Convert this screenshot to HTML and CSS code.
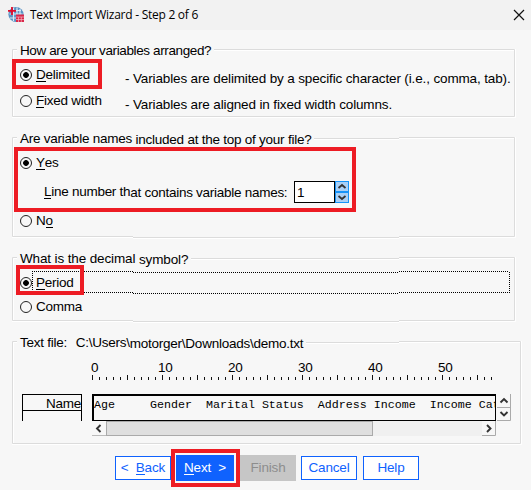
FILE: index.html
```html
<!DOCTYPE html>
<html lang="en">
<head>
<meta charset="utf-8">
<title>Text Import Wizard - Step 2 of 6</title>
<link rel="stylesheet" href="styles.css">
</head>
<body>
<div class="window">
  <header class="titlebar">
    <svg class="app-icon" width="18" height="18" viewBox="0 0 18 18">
      <circle cx="9" cy="8.500" r="7.600" fill="#5b92c4"/>
      <path d="M4 4.500h10M2.500 8h13M3 12h7M6.500 2v13M10 1.500v14M13 3v6" stroke="#d9e9f5" stroke-width="1.200" fill="none"/>
      <path d="M5 1v8M1 4.800h8" stroke="#e00b2b" stroke-width="1.800"/>
      <path d="M9 8.500h8V16H9z" fill="#d92749"/>
      <path d="M9 11h8M9 13.500h8M11.500 11v5M14.300 11v5" stroke="#f5b5bf" stroke-width=".7"/>
    </svg>
    <h1 class="title">Text Import Wizard - Step 2 of 6</h1>
    <svg class="close" width="12" height="12" viewBox="0 0 12 12"><path d="M1 1l10 10M11 1L1 11" stroke="#111" stroke-width="1.200"/></svg>
  </header>

  <main class="content">
    <section class="group arrange">
      <svg class="frame" width="504" height="69"><path class="hi" d="M1.500 67.500V1.500H502M503.500 0V68.500H0"/><path d="M.5.5H502.500V67.500H.5z"/></svg>
      <h2 class="legend">How are your variables arranged?</h2>
      <div class="row r-delimited"><i class="radio on"></i><span class="opt"><u>D</u>elimited</span><span class="desc">- Variables are delimited by a specific character (i.e., comma, tab).</span></div>
      <div class="row r-fixed"><i class="radio"></i><span class="opt"><u>F</u>ixed width</span><span class="desc">- Variables are aligned in fixed width columns.</span></div>
      <div class="mark mark-delimited"></div>
    </section>

    <section class="group names">
      <svg class="frame" width="504" height="102"><path class="hi" d="M1.500 99V1.500H121M121 2.500H387M387 1.500H502M503.500 0V100.500H387M387 101.500H121M121 100.500H0"/><path d="M121 .5H.5V99.500H121M121 1.500H387M121 100.500H387M387 .5H502.500V99.500H387"/></svg>
      <h2 class="legend">Are variable names <span class="low">included at the top of your file?</span></h2>
      <div class="row r-yes"><i class="radio on"></i><span class="opt"><u>Y</u>es</span></div>
      <div class="row r-line">
        <span class="line-label"><u>L</u>ine number th<span class="low">at contains variable names:</span></span>
        <div class="spinner"><span class="value">1</span>
          <div class="steps">
            <svg width="14" height="11" viewBox="0 0 14 11"><rect x=".5" y=".5" width="13" height="10" fill="#a9d0f7" stroke="#1693f8"/><path d="M3.500 7L7 4l3.500 3" fill="none" stroke="#333" stroke-width="1.800"/></svg>
            <svg width="14" height="11" viewBox="0 0 14 11"><rect x=".5" y=".5" width="13" height="10" fill="#a9d0f7" stroke="#1693f8"/><path d="M3.500 4L7 7l3.500-3" fill="none" stroke="#333" stroke-width="1.800"/></svg>
          </div>
        </div>
      </div>
      <div class="row r-no"><i class="radio"></i><span class="opt">N<u>o</u></span></div>
      <div class="mark mark-yes"></div>
    </section>

    <section class="group decimal">
      <svg class="frame" width="504" height="66"><path class="hi" d="M1.500 63V1.500H121M121 2.500H387M387 1.500H502M503.500 0V64.500H387M387 65.500H121M121 64.500H0"/><path d="M121 .5H.5V63.500H121M121 1.500H387M121 64.500H387M387 .5H502.500V63.500H387"/><path class="focus" d="M20.500 14V35M20 14.500H121M20 35.500H121M121 15.500H387M121 36.500H387M387 14.500H497M387 35.500H497M497.500 15V36"/></svg>
      <h2 class="legend">What is the decimal <span class="low">symbol?</span></h2>
      <div class="row r-period"><i class="radio on"></i><span class="opt"><u>P</u>eriod</span></div>
      <div class="row r-comma"><i class="radio"></i><span class="opt">Comma</span></div>
      <div class="mark mark-period"></div>
    </section>

    <section class="group file">
      <svg class="frame" width="510" height="104"><path class="hi" d="M1.500 102V1.500H121M121 2.500H387M387 1.500H508M509.500 0V103.500H0"/><path d="M121 .5H.5V102.500H508.500V.5H387M121 1.500H387"/></svg>
      <h2 class="legend">Text file: <span class="path">C:\Users\<span class="low">motorger\Downloads\demo.txt</span></span></h2>
      <div class="ruler">
        <div class="numbers"><span>0</span><span>10</span><span>20</span><span>30</span><span>40</span><span>50</span></div>
        <svg width="404" height="5"><path d="M0 3.500H400" stroke="#111" stroke-width="3" stroke-dasharray="1 6"/><path d="M0 2.500H400" stroke="#111" stroke-width="5" stroke-dasharray="1 34"/></svg>
      </div>
      <div class="preview">
        <div class="name-col"><div class="name">Name</div></div>
        <div class="data">
          <pre class="text">Age     Gender  Marital Status  Address Income  Income Cat</pre>
          <div class="hscroll">
            <svg width="14" height="15"><path d="M8.500 4L5 7.500L8.500 11" fill="none" stroke="#333" stroke-width="1.900"/></svg>
            <div class="thumb"></div>
            <svg class="right" width="14" height="15"><path d="M5 4l3.500 3.500L5 11" fill="none" stroke="#333" stroke-width="1.900"/><path d="M0 14.500H13.500V0" fill="none" stroke="#aaa"/></svg>
          </div>
        </div>
        <svg class="vscroll" width="14" height="27"><path d="M0 26.500H13.500V0M0 13.500H14" fill="none" stroke="#aaa"/><path d="M3.500 8.500L7 5l3.500 3.500M3.500 18L7 21.500l3.500-3.500" fill="none" stroke="#333" stroke-width="1.900"/></svg>
      </div>
    </section>
  </main>

  <footer class="buttons">
    <button class="btn back">&lt; &nbsp;<u>B</u>ack</button>
    <button class="btn next"><u>N</u>ext &nbsp;&gt;</button>
    <button class="btn finish">Finish</button>
    <button class="btn cancel">Cancel</button>
    <button class="btn help">Help</button>
    <div class="mark mark-next"></div>
  </footer>
</div>
</body>
</html>
```
FILE: styles.css
```css
* { box-sizing: border-box; }
body { margin: 0; background: #f7f7f7; color: #000; font: 13.5px/16px "Liberation Sans", Arial, sans-serif; letter-spacing: -.24px; }
.window { width: 531px; height: 490px; overflow: hidden; }
h1, h2, pre { margin: 0; font-weight: normal; }
u { text-decoration: none; border-bottom: 1px solid currentColor; display: inline-block; height: 15px; line-height: 16px; }
.titlebar { height: 30px; display: flex; align-items: center; padding: 0 6px 1px 7px; background: #f2f2f2; }
.app-icon { flex: none; margin-right: 5px; }
.title { font: 12px/18px "Open Sans", "Noto Sans", sans-serif; letter-spacing: -.26px; flex: 1; white-space: nowrap; }
.content { padding: 19px 11px 0 12px; display: flex; flex-direction: column; }
.group { position: relative; width: 504px; }
.frame { position: absolute; left: 0; top: 0; overflow: visible; }
.frame path { fill: none; stroke: #dcdcdc; }
.frame .hi { stroke: #fff; }
.frame .focus { stroke: #000; stroke-dasharray: 1 1; }
.legend { position: absolute; left: 5px; top: -6px; padding: 0 3px; background: #f7f7f7; font-size: 13.5px; line-height: 16px; height: 16px; white-space: pre; }
.low { position: relative; top: 1px; }
.arrange { height: 88px; padding-top: 17px; }
.arrange .legend { letter-spacing: -.38px; }
.names { height: 120px; padding-top: 17px; }
.decimal { height: 84px; padding-top: 17px; }
.decimal .legend { letter-spacing: -.13px; }
.file { height: 104px; width: 510px; padding-top: 20px; }
.row { position: relative; display: flex; align-items: center; height: 17px; padding-left: 8px; white-space: pre; }
.radio { flex: none; width: 12px; height: 12px; border: 1px solid #222; border-radius: 50%; margin-right: 4px; }
.radio.on { background: radial-gradient(circle, #000 0 2.500px, transparent 3.200px); }
.opt { display: block; flex: none; }
.arrange .opt { width: 89px; }
.desc { position: relative; top: 4px; letter-spacing: -.14px; }
.r-fixed { margin-top: 9px; }
.r-line { height: 22px; margin-top: 10px; padding-left: 32px; }
.line-label { width: 250px; flex: none; letter-spacing: -.27px; }
.spinner { display: flex; width: 55px; height: 22px; }
.value { width: 41px; border: 1px solid #000; background: #fff; padding: 1px 2px; line-height: 20px; }
.steps { display: flex; flex-direction: column; }
.steps svg { display: block; }
.r-no { margin-top: 9px; }
.r-comma { margin-top: 7px; }
.mark { position: absolute; border: 4px solid #ed1c24; z-index: 2; }
.mark-delimited { left: 0; top: 10px; width: 90px; height: 30px; }
.mark-yes { left: 2px; top: 10px; width: 342px; height: 65px; }
.mark-period { left: 4px; top: 8px; width: 68px; height: 30px; }
.path { margin-left: 5px; }
.ruler { padding-left: 80px; height: 34px; }
.ruler svg { display: block; }
.numbers { display: flex; height: 14px; line-height: 13px; font-size: 13.5px; }
.numbers span { width: 67px; margin-left: -1px; flex: none; }
.numbers span + span { width: 70px; margin-left: 0; }
.preview { display: flex; padding-left: 10px; margin-top: -1px; }
.name-col { width: 60px; height: 27px; margin-right: 10px; border: 1px solid #000; border-bottom: 0; }
.name { height: 16px; border-bottom: 1px solid #000; text-align: right; line-height: 17px; }
.data { flex: 0 0 404px; }
.text { width: 404px; height: 27px; border: 1px solid #000; border-top-width: 2px; border-left-width: 2px; overflow: hidden; font: 11.67px/19px "Liberation Mono", monospace; letter-spacing: 0; }
.hscroll { display: flex; width: 404px; height: 15px; background: #f0f0f0; }
.hscroll svg { flex: none; background: #f7f7f7; border-bottom: 1px solid #bbb; }
.thumb { width: 267px; background: #dfdfdf; border: 1px solid #aaa; }
.hscroll .right { margin-left: auto; border: 0; }
.vscroll { flex: none; margin-left: 1px; }
.buttons { position: relative; display: flex; padding-left: 115px; margin-top: 11px; gap: 6px; }
.btn { width: 56px; height: 24px; margin: 0; padding: 0; border: 1px solid #0f62fe; background: #fff; color: #0f62fe; font: 13.5px/16px "Liberation Sans", Arial, sans-serif; white-space: pre; letter-spacing: -.15px; }
.btn.back { margin-right: -1px; }
.btn.next { width: 58px; height: 26px; margin: -1px 0 0 0; background: #0f62fe; color: #fff; }
.btn.finish { margin: -1px -1px 0 0; height: 26px; border-color: #c6c6c6; background: #c6c6c6; color: #8d8d8d; }
.mark-next { left: 171px; top: -7px; width: 69px; height: 38px; }
```
